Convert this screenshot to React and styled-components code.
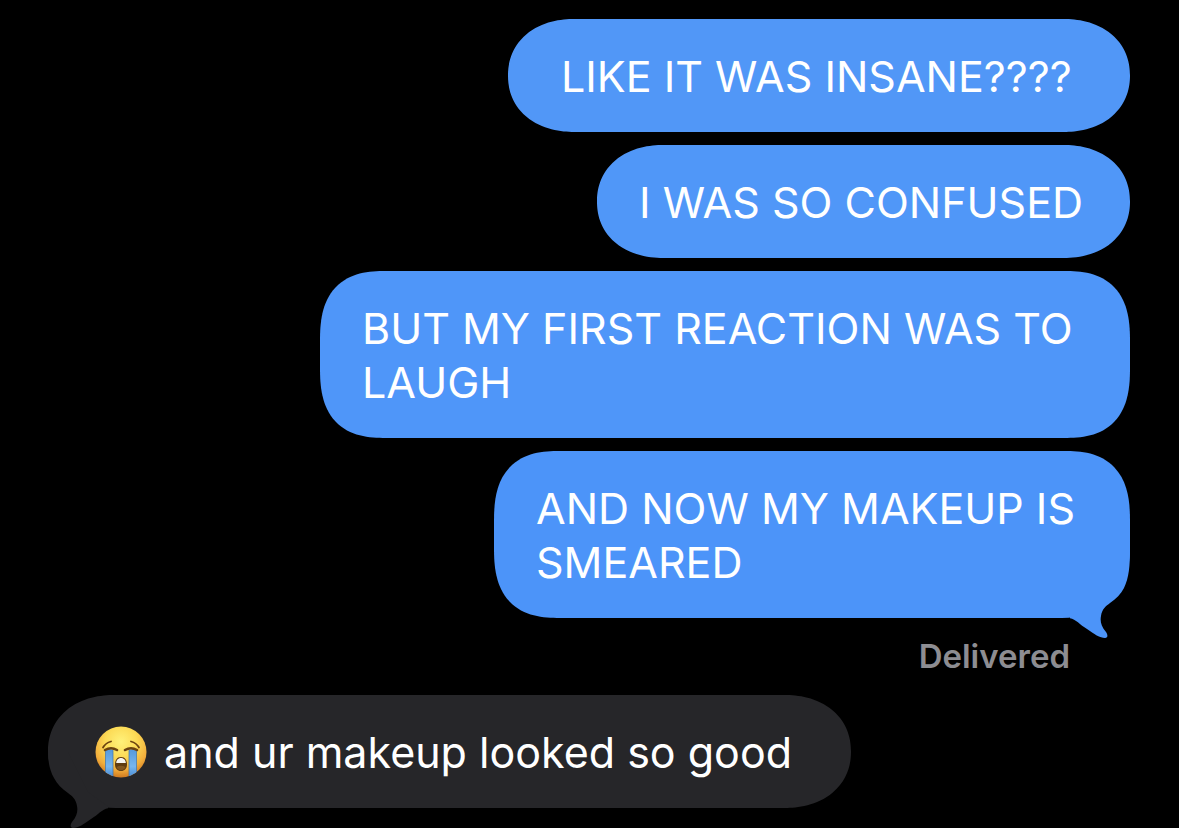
import React from "react";
import styled, { createGlobalStyle, css } from "styled-components";

const GlobalStyles = createGlobalStyle`
  *, *::before, *::after {
    box-sizing: border-box;
  }

  body {
    margin: 0;
    background: #000;
    color: #fff;
    font-family: Inter, "Liberation Sans", sans-serif;
    overflow: hidden;
  }
`

const Conversation = styled.main`
  width: 100%;
  padding: 19px 49px 20px 48px;
`
const MessageList = styled.ol`
  display: flex;
  flex-direction: column;
  gap: 13px;
  margin: 0;
  padding: 0;
  list-style: none;
`
const Bubble = styled.li`
  position: relative;
  width: ${(props) => props.$width}px;
  max-width: 100%;
  padding: 30px 0 29px ${(props) => props.$inset || 42}px;
  border-radius: 60px / ${(props) => (props.$tall ? 60 : 56)}px;
  font-size: 43px;
  line-height: 54px;

  @supports (corner-shape: superellipse(1.2)) {
    border-radius: 66px / ${(props) => (props.$tall ? 70 : 56)}px;
    corner-shape: superellipse(${(props) => (props.$tall ? 1.37 : 1.1)});
  }
`
const SentBubble = styled(Bubble)`
  align-self: flex-end;
  background: ${(props) => props.$color};

  ${(props) => props.$tail && css`
    && {
      border-bottom-right-radius: 68px;
      corner-bottom-right-shape: round;
    }
  `}
`
const ReceivedBubble = styled(Bubble)`
  align-self: flex-start;
  display: flex;
  align-items: center;
  gap: 17px;
  padding-left: 47px;
  background: #262629;

  && {
    border-bottom-left-radius: 68px 56px;
    corner-bottom-left-shape: round;
  }
`
const SentTail = styled.svg`
  position: absolute;
  right: 0;
  bottom: -20px;
  width: 60px;
  height: 88px;
  fill: ${(props) => props.$color};
`
const ReceivedTail = styled.svg`
  position: absolute;
  left: 0;
  bottom: -20px;
  width: 60px;
  height: 76px;
  fill: #262629;
  transform: scaleX(-1);
`
const Receipt = styled.p`
  margin: 18px 60px 18px 0;
  color: #8d8d92;
  font-size: 33px;
  font-weight: 600;
  line-height: 41px;
  text-align: right;
`
const Emoji = styled.svg`
  flex: none;
  width: 52px;
  height: 52px;
`

const sent = [
  { text: "LIKE IT WAS INSANE????", width: 622, inset: 53, color: "#5197f7" },
  { text: "I WAS SO CONFUSED", width: 533, color: "#5097f8" },
  { text: <>BUT MY FIRST REACTION WAS TO<br />LAUGH</>, width: 810, tall: true, color: "#4f96f9" },
  { text: <>AND NOW MY MAKEUP IS<br />SMEARED</>, width: 636, tall: true, tail: true, color: "#4c94f9" },
]

function CryingFace() {
  return (
    <Emoji viewBox="0 0 52 52" role="img" aria-label="Loudly crying face">
      <defs>
        <radialGradient id="face" cx="50%" cy="30%" r="70%">
          <stop offset="0" stopColor="#fff27a" />
          <stop offset="0.45" stopColor="#fcda55" />
          <stop offset="0.78" stopColor="#f2ae3c" />
          <stop offset="1" stopColor="#d07a20" />
        </radialGradient>
        <linearGradient id="tears" x1="0" y1="0" x2="0" y2="1">
          <stop offset="0" stopColor="#5598dc" />
          <stop offset="0.6" stopColor="#78b6ee" />
          <stop offset="1" stopColor="#4488d2" />
        </linearGradient>
        <clipPath id="round">
          <circle cx="26" cy="26" r="25.5" />
        </clipPath>
      </defs>
      <circle cx="26" cy="26" r="25.5" fill="url(#face)" />
      <g clipPath="url(#round)">
        <path d="M10.5 24 Q14 22 18 24 V52 H10.5 Z" fill="url(#tears)" />
        <path d="M34 24 Q38 22 41.5 24 V52 H34 Z" fill="url(#tears)" />
        <path d="M10.5 24 V52 M41.5 24 V52 M18 24 V52 M34 24 V52" stroke="#3c74b0" strokeWidth="0.7" />
      </g>
      <g fill="none" stroke="#6b4310" strokeLinecap="round">
        <path d="M8 21.5 Q10.5 17 16 15.5 M44 21.5 Q41.5 17 36 15.5" strokeWidth="1.8" />
        <path d="M10 24 Q16 20.5 22 24 M42 24 Q36 20.5 30 24" strokeWidth="2.6" />
      </g>
      <path d="M26 31 C30.5 31 32 35 32 38.5 C32 42.5 29.5 45 26 45 C22.5 45 20 42.5 20 38.5 C20 35 21.5 31 26 31 Z" fill="#5f3b10" />
      <path d="M26 32 C29 32 30.8 34.5 30.8 37 H21.2 C21.2 34.5 23 32 26 32 Z" fill="#f5f4ef" />
      <path d="M21.5 41 Q26 38.5 30.5 41 Q29 44.2 26 44.2 Q23 44.2 21.5 41 Z" fill="#80551f" />
    </Emoji>
  )
}

function App() {
  return (
    <>
      <GlobalStyles />
      <Conversation>
        <MessageList>
          {sent.map((message, i) => (
            <SentBubble
              key={i}
              $width={message.width}
              $inset={message.inset}
              $tall={message.tall}
              $tail={message.tail}
              $color={message.color}
            >
              {message.text}
              {message.tail && (
                <SentTail $color={message.color} viewBox="0 0 60 88" aria-hidden="true">
                  <path d="M60 0 C60 15 59 28 54 38 C51 44 46 49 40 53 C36 56 32 59 31 66 C30 71 31 76 36 82 C38 85 38 88 35 88 C30 88 24 84 17 79 C9 74 5 68 -2 68 L0 50 L0 0 Z" />
                </SentTail>
              )}
            </SentBubble>
          ))}
        </MessageList>
        <Receipt>Delivered</Receipt>
        <MessageList>
          <ReceivedBubble $width={803}>
            <CryingFace />
            <span>and ur makeup looked so good</span>
            <ReceivedTail viewBox="0 0 60 76" aria-hidden="true">
              <path d="M60 0 C60 10 58 19 54 26 C51 32 46 37 40 41 C36 44 32 47 31 54 C30 59 31 64 36 70 C38 73 38 76 35 76 C30 76 24 72 17 67 C9 62 5 56 -2 56 L20 40 L40 0 Z" />
            </ReceivedTail>
          </ReceivedBubble>
        </MessageList>
      </Conversation>
    </>
  )
}

export default App
